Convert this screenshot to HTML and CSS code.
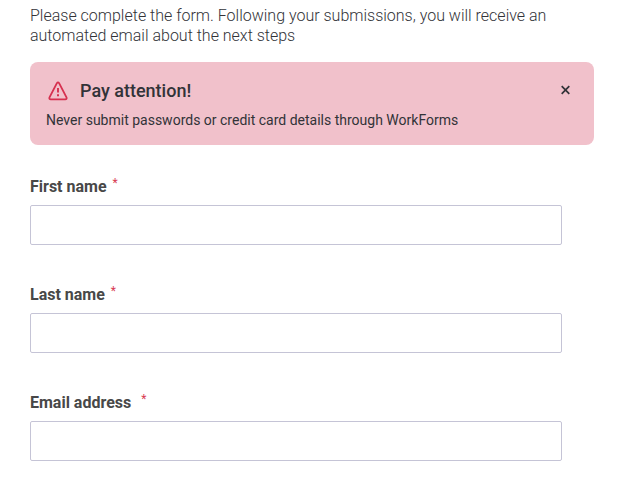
FILE: index.html
```html
<!DOCTYPE html>
<html lang="en">
<head>
<meta charset="utf-8">
<meta name="viewport" content="width=device-width, initial-scale=1">
<title>WorkForms</title>
<link rel="stylesheet" href="styles.css">
</head>
<body>
<main class="page">
  <p class="intro">Please complete the form. Following your submissions, you will receive an automated email about the next steps</p>
  <section class="alert" role="alert">
    <header class="alert-header">
      <svg class="alert-icon" viewBox="0 0 20 20" aria-hidden="true">
        <path d="M8.9 2.2Q10 .4 11.1 2.2L18.5 16.3Q19.2 18.3 17.2 18.4H2.8Q.8 18.3 1.5 16.3Z" fill="none" stroke="currentColor" stroke-width="1.8" stroke-linejoin="round"/>
        <path d="M10 7V11.6" stroke="currentColor" stroke-width="1.9"/>
        <path d="M10 13.2V15.2" stroke="currentColor" stroke-width="2"/>
      </svg>
      <h2 class="alert-title">Pay attention!</h2>
      <button class="close" type="button" aria-label="Close">
        <svg class="close-icon" viewBox="0 0 12 12" aria-hidden="true"><path d="M1.7 1.2 9.3 8.8M9.3 1.2 1.7 8.8" stroke="currentColor" stroke-width="1.7"/></svg>
      </button>
    </header>
    <p class="alert-text">Never submit passwords or credit card details through WorkForms</p>
  </section>
  <form class="form">
    <div class="field">
      <label class="label" for="first">First name <span class="required">*</span></label>
      <input class="input" id="first" type="text" required>
    </div>
    <div class="field">
      <label class="label" for="last">Last name <span class="required">*</span></label>
      <input class="input" id="last" type="text" required>
    </div>
    <div class="field">
      <label class="label" for="email">Email address&nbsp; <span class="required">*</span></label>
      <input class="input" id="email" type="email" required>
    </div>
  </form>
</main>
</body>
</html>
```
FILE: styles.css
```css
* {
  box-sizing: border-box;
}

body {
  margin: 0;
  background: #fff;
  color: #323338;
  font-family: Roboto, "Liberation Sans", sans-serif;
}

.page {
  padding: 6px 34px 29px 30px;
}

.intro {
  margin: 0 0 16px;
  font-size: 16px;
  font-weight: 300;
  line-height: 20px;
}

.alert {
  padding: 16px 16px 15px;
  border-radius: 8px;
  background: #f1c1cb;
}

.alert-header {
  display: flex;
  align-items: center;
  height: 26px;
}

.alert-icon {
  width: 20px;
  height: 20px;
  margin: 0 12px 0 2px;
  color: #d6304f;
}

.alert-title {
  flex: 1;
  margin: 0;
  font-size: 18px;
  font-weight: 500;
  line-height: 24px;
}

.close {
  display: flex;
  align-items: center;
  justify-content: center;
  width: 24px;
  height: 24px;
  padding: 0;
  border: 0;
  background: none;
  color: inherit;
}

.close-icon {
  width: 12px;
  height: 12px;
}

.alert-text {
  margin: 6px 0 0;
  font-size: 14px;
  line-height: 20px;
}

.form {
  display: grid;
  gap: 38px;
  margin-top: 30px;
  padding-right: 32px;
}

.label {
  display: block;
  height: 30px;
  color: #484848;
  font-size: 16px;
  font-weight: 700;
  line-height: 24px;
}

.required {
  margin-left: 2px;
  color: #d83a52;
  font-size: 12px;
  font-weight: 400;
  line-height: 12px;
  vertical-align: 5px;
}

.input {
  display: block;
  width: 100%;
  height: 40px;
  padding: 8px 12px;
  border: 1px solid #c5c4d6;
  border-radius: 2px;
  background: #fff;
  font: inherit;
}
```
